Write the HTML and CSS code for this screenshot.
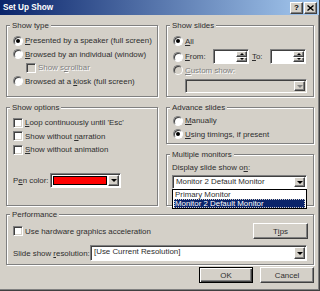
FILE: index.html
```html
<!DOCTYPE html>
<html lang="en">
<head>
  <meta charset="UTF-8">
  <title>Set Up Show</title>
  <link rel="stylesheet" href="styles.css">
</head>
<body>
  <div class="window">

    <div class="titlebar">
      <span class="title">Set Up Show</span>
      <div class="caption-btns">
        <span class="cap-btn raised">?</span>
        <span class="cap-btn raised">
          <svg width="7" height="6" viewBox="0 0 7 6"><path d="M0.5 0.5 L6.5 5.5 M6.5 0.5 L0.5 5.5" stroke="#000" stroke-width="1.4" fill="none"/></svg>
        </span>
      </div>
    </div>

    <div class="dialog">
      <div class="columns">

        <div class="col col-left">
          <div class="group show-type">
            <span class="group-title">Show type</span>
            <div class="opt"><span class="radio on"></span><span><u>P</u>resented by a speaker (full screen)</span></div>
            <div class="opt"><span class="radio"></span><span><u>B</u>rowsed by an individual (window)</span></div>
            <div class="opt sub"><span class="check off"></span><span class="disabled">Show s<u>c</u>rollbar</span></div>
            <div class="opt"><span class="radio"></span><span>Browsed at a <u>k</u>iosk (full screen)</span></div>
          </div>

          <div class="group show-options">
            <span class="group-title">Show options</span>
            <div class="opt"><span class="check"></span><span><u>L</u>oop continuously until 'Esc'</span></div>
            <div class="opt"><span class="check"></span><span>Show without <u>n</u>arration</span></div>
            <div class="opt"><span class="check"></span><span><u>S</u>how without animation</span></div>
            <div class="pen-row">
              <span class="pen-label">P<u>e</u>n color:</span>
              <div class="field color-combo">
                <span class="swatch"></span>
                <span class="drop raised"><span class="arrow-down"></span></span>
              </div>
            </div>
          </div>
        </div>

        <div class="col col-right">
          <div class="group show-slides">
            <span class="group-title">Show slides</span>
            <div class="opt all-row"><span class="radio on"></span><span><u>A</u>ll</span></div>
            <div class="opt from-row">
              <span class="radio"></span>
              <span class="from-label"><u>F</u>rom:</span>
              <div class="field spin">
                <span class="spin-text"></span>
                <span class="spin-btns">
                  <span class="raised"><span class="arrow-up"></span></span>
                  <span class="raised"><span class="arrow-down small"></span></span>
                </span>
              </div>
              <span class="to-label"><u>T</u>o:</span>
              <div class="field spin">
                <span class="spin-text"></span>
                <span class="spin-btns">
                  <span class="raised"><span class="arrow-up"></span></span>
                  <span class="raised"><span class="arrow-down small"></span></span>
                </span>
              </div>
            </div>
            <div class="opt custom-row"><span class="radio off"></span><span class="disabled"><u>C</u>ustom show:</span></div>
            <div class="field combo custom-combo off">
              <span class="combo-text"></span>
              <span class="drop raised"><span class="arrow-down grey"></span></span>
            </div>
          </div>

          <div class="group advance">
            <span class="group-title">Advance slides</span>
            <div class="opt"><span class="radio"></span><span><u>M</u>anually</span></div>
            <div class="opt"><span class="radio on"></span><span><u>U</u>sing timings, if present</span></div>
          </div>

          <div class="group monitors">
            <span class="group-title">Multiple monitors</span>
            <div class="mon-label">Display slide show o<u>n</u>:</div>
            <div class="field combo monitor-combo">
              <span class="combo-text">Monitor 2 Default Monitor</span>
              <span class="drop raised"><span class="arrow-down"></span></span>
              <ul class="drop-list">
                <li>Primary Monitor</li>
                <li class="selected">Monitor 2 Default Monitor</li>
              </ul>
            </div>
          </div>
        </div>

      </div>

      <div class="group performance">
        <span class="group-title">Performance</span>
        <div class="perf-row">
          <div class="opt"><span class="check"></span><span>Use hardware graphics acceleration</span></div>
          <span class="btn raised tips">T<u>i</u>ps</span>
        </div>
        <div class="perf-row res-row">
          <span class="res-label">Slide show <u>r</u>esolution:</span>
          <div class="field combo res-combo">
            <span class="combo-text">[Use Current Resolution]</span>
            <span class="drop raised"><span class="arrow-down"></span></span>
          </div>
        </div>
      </div>

      <div class="buttons">
        <span class="btn default">OK</span>
        <span class="btn raised">Cancel</span>
      </div>
    </div>

  </div>
</body>
</html>
```

FILE: styles.css
```css
* { margin: 0; padding: 0; box-sizing: border-box; }
body { font-family: "Liberation Sans", Arial, sans-serif; font-size: 7.9px; color: #2e2e2e; background: #d4d0c8; }
u { text-decoration: underline; text-underline-offset: 1px; }
ul { list-style: none; }

.window { width: 320px; height: 291px; background: #d4d0c8; border-right: 1px solid #404040; border-bottom: 1px solid #404040; box-shadow: inset -1px -1px 0 #808080; }

.titlebar { height: 15px; display: flex; align-items: center; justify-content: space-between; padding: 0 2px 0 3px; background: linear-gradient(to right, #0a246a, #a6caf0); }
.title { color: #fff; font-weight: bold; font-size: 8.2px; }
.caption-btns { display: flex; gap: 1px; }
.cap-btn { width: 13px; height: 12px; display: flex; align-items: center; justify-content: center; font-weight: bold; font-size: 8px; color: #000; }

.raised { background: #d4d0c8; border: 1px solid; border-color: #fff #404040 #404040 #fff; box-shadow: inset -1px -1px 0 #808080; }
.field { display: flex; background: #fff; border: 1px solid; border-color: #808080 #fff #fff #808080; box-shadow: inset 1px 1px 0 #404040; padding: 1px 1px 1px 2px; }
.disabled { color: #808080; text-shadow: 1px 1px 0 #fff; }

.dialog { padding: 10px 5px 0 6px; }
.columns { display: flex; gap: 8px; }
.col { display: flex; flex-direction: column; gap: 10px; }
.col-left { width: 152px; }
.col-right { width: 148px; }

.group { position: relative; border: 1px solid #808080; box-shadow: inset 1px 1px 0 #fff, 1px 1px 0 #fff; padding-left: 6px; }
.group-title { position: absolute; top: -6px; left: 3px; padding: 0 2px; line-height: 11px; background: #d4d0c8; }

.opt { display: flex; align-items: center; gap: 2px; height: 13.5px; white-space: nowrap; }
.opt.sub { margin-left: 13px; }

.radio { position: relative; flex-shrink: 0; width: 10px; height: 10px; border-radius: 50%; background: #fff; border: 1px solid; border-color: #808080 #fff #fff #808080; box-shadow: inset 1px 1px 0 #404040; }
.radio.on::after { content: ""; position: absolute; left: 2px; top: 2px; width: 4px; height: 4px; border-radius: 50%; background: #000; }
.radio.off { background: #d4d0c8; }
.check { flex-shrink: 0; width: 10px; height: 10px; background: #fff; border: 1px solid; border-color: #808080 #fff #fff #808080; box-shadow: inset 1px 1px 0 #404040, inset -1px -1px 0 #d4d0c8; }
.check.off { background: #d4d0c8; }

.arrow-down { width: 0; height: 0; border-left: 3px solid transparent; border-right: 3px solid transparent; border-top: 3px solid #000; }
.arrow-down.small { border-left-width: 2px; border-right-width: 2px; border-top-width: 2px; }
.arrow-down.grey { border-top-color: #808080; }
.arrow-up { width: 0; height: 0; border-left: 2px solid transparent; border-right: 2px solid transparent; border-bottom: 2px solid #000; }
.drop { width: 11px; flex-shrink: 0; display: flex; align-items: center; justify-content: center; }

/* show type */
.show-type { height: 72px; padding-top: 8px; }

/* show slides */
.show-slides { height: 72px; padding-top: 8px; }
.all-row { height: 14px; }
.from-row { height: 15px; margin-top: 1px; gap: 0; }
.from-row .radio { margin-right: 2px; }
.from-label { width: 28px; }
.to-label { width: 18px; margin-left: 3px; }
.spin { width: 36px; height: 15px; }
.spin-text { flex: 1; }
.spin-btns { width: 11px; display: flex; flex-direction: column; }
.spin-btns .raised { flex: 1; display: flex; align-items: center; justify-content: center; }
.custom-row { height: 12px; }
.combo { height: 14px; align-items: stretch; }
.combo-text { flex: 1; line-height: 10px; padding-left: 1px; white-space: nowrap; overflow: hidden; }
.custom-combo { width: 122px; margin: 3px 0 0 12px; }
.combo.off { background: #d4d0c8; }

/* show options */
.show-options { height: 99px; padding-top: 8px; }
.pen-row { display: flex; align-items: center; height: 15px; margin-top: 16.5px; }
.pen-label { width: 37px; }
.color-combo { width: 71px; height: 15px; padding: 1px; }
.swatch { flex: 1; margin: 1px; background: #ff0000; border: 1px solid #000; }

/* advance */
.advance { height: 37px; padding-top: 6px; }

/* monitors */
.monitors { height: 52px; padding: 6.5px 0 0 5px; }
.mon-label { line-height: 11px; }
.monitor-combo { position: relative; width: 135px; margin-top: 2.5px; }
.drop-list { position: absolute; top: 13px; left: -1px; right: -1px; background: #fff; border: 1px solid #000; padding: 0 1px; }
.drop-list li { line-height: 9px; padding-left: 1px; white-space: nowrap; }
.drop-list li.selected { background: #0a246a; color: #fff; outline: 1px dotted #d4d0c8; outline-offset: -1px; }

/* performance */
.performance { height: 51px; margin-top: 8px; padding: 8px 5px 0 6px; }
.perf-row { display: flex; align-items: center; justify-content: space-between; height: 16px; }
.res-row { justify-content: flex-start; margin-top: 6px; }
.res-label { width: 77px; white-space: nowrap; }
.res-combo { width: 217px; height: 16px; }

/* buttons */
.btn { width: 55px; height: 16px; display: flex; align-items: center; justify-content: center; box-shadow: inset -1px -1px 0 #808080; }
.btn.default { border: 1px solid #000; background: #d4d0c8; box-shadow: inset 1px 1px 0 #fff, inset -1px -1px 0 #404040, inset -2px -2px 0 #808080; }
.buttons { display: flex; justify-content: flex-end; gap: 7px; margin-top: 2px; }
.buttons .btn { width: 54px; }
```
